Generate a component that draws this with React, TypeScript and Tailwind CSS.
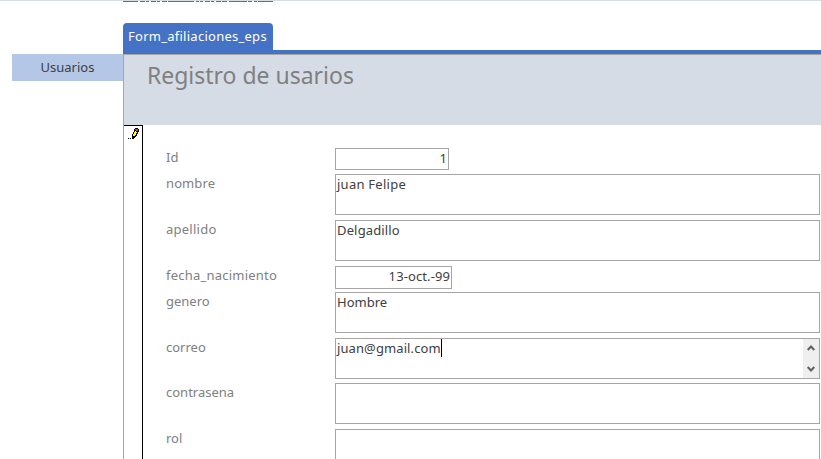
type Row = {
  label: string;
  value: string;
  row: string;
  box: string;
  labelTrack?: string;
  valueTrack?: string;
  active?: boolean;
};

const rows: Row[] = [
  { label: 'Id', value: '1', row: 'h-[22px] mb-1', box: 'w-[114px] text-right' },
  { label: 'nombre', value: 'juan Felipe', row: 'h-[41px] mb-[5px]', box: 'w-[485px]', labelTrack: 'tracking-[0.1px]', valueTrack: 'tracking-[0.25px]' },
  { label: 'apellido', value: 'Delgadillo', row: 'h-[41px] mb-[5px]', box: 'w-[485px]', labelTrack: 'tracking-[0.25px]', valueTrack: 'tracking-[0.15px]' },
  { label: 'fecha_nacimiento', value: '13-oct.-99', row: 'h-[23px] mb-[3px]', box: 'w-[117px] text-right', labelTrack: 'tracking-[0.22px]', valueTrack: 'tracking-[0.1px]' },
  { label: 'genero', value: 'Hombre', row: 'h-[41px] mb-[5px]', box: 'w-[485px]' },
  { label: 'correo', value: 'juan@gmail.com', row: 'h-[41px] mb-1', box: 'w-[485px]', valueTrack: 'tracking-[0.1px]', active: true },
  { label: 'contrasena', value: '', row: 'h-[41px] mb-[5px]', box: 'w-[485px]' },
  { label: 'rol', value: '', row: 'h-[41px]', box: 'w-[485px]' },
];

const segments = [
  'w-[15px]', 'w-[5px]', 'w-[3px]', 'w-[5px]', 'w-[3px]', 'w-[5px]', 'w-[26px]',
  'w-[3px]', 'w-[3px]', 'w-[5px]', 'w-[3px]', 'w-[5px]', 'w-[5px]', 'w-[18px]', 'w-[4px]', 'w-[3px]', 'w-[15px]',
];

function Pencil() {
  return (
    <svg className="ml-1 mt-0.5 shrink-0" width="12" height="12" viewBox="0 0 12 12" shapeRendering="crispEdges">
      <path fill="#000" d="M0 10h1v1h-1zM2 10h1v1h-1zM7 0h3v1h1v3h-1v2h-1v2h-1v1h-1v1h-1v1h-2v-5h1v-2h1v-3h1z" />
      <path fill="#ffff00" d="M7 3h1v1h1v1h-1v2h-1v1h-2v-2h1v-2h1z" />
      <path fill="#e04020" d="M7 1h3v2h-2v-1h-1z" />
    </svg>
  );
}

export default function App() {
  return (
    <div className="flex h-[459px] w-[821px] flex-col overflow-hidden bg-white text-[13px] text-[#404040] [font-family:'Noto_Sans',sans-serif]">
      <div className="h-px shrink-0 bg-[#d6dce5]" />
      <div className="ml-[123px] flex h-px w-[150px] shrink-0 justify-between">
        {segments.map((w, i) => (
          <div key={i} className={`h-px bg-[#4472c4] ${w}`} />
        ))}
      </div>
      <div className="mt-[21px] flex min-h-0 grow">
        <div className="ml-3 mt-[31px] h-[27px] w-[111px] shrink-0 bg-[#b4c7e7] text-center leading-[27px]">Usuarios</div>
        <div className="flex w-[698px] shrink-0 flex-col">
          <div className="h-[27px] w-[150px] shrink-0 rounded-t-[4px] bg-[#4472c4] pl-[5px] leading-[27px] tracking-[0.26px] text-white">Form_afiliaciones_eps</div>
          <div className="h-1 shrink-0 bg-[#4472c4]" />
          <div className="flex min-h-0 grow flex-col border-l border-t border-[#a6a6a6]">
            <div className="h-[70px] shrink-0 bg-[#d6dce5] pl-[23px] pt-[3px] text-[24px] leading-[34px] text-[#808080]">
              <span className="inline-block origin-left scale-x-[0.957]">Registro de usarios</span>
            </div>
            <div className="flex min-h-0 grow">
              <div className="w-[19px] shrink-0 border-r border-t border-black"><Pencil /></div>
              <div className="pl-[23px] pt-[23px]">
                {rows.map((r) => (
                  <div key={r.label} className={`flex ${r.row}`}>
                    <div className={`w-[169px] shrink-0 leading-[18px] text-[#808080] ${r.labelTrack ?? ''}`}>{r.label}</div>
                    <div className={`flex justify-between border border-[#a6a6a6] ${r.box}`}>
                      <div className="flex grow items-start px-px leading-[18px]">
                        <span className={`${r.active ? '' : 'grow'} ${r.valueTrack ?? ''}`}>{r.value}</span>
                        {r.active && <span className="h-[18px] w-px bg-black" />}
                      </div>
                      {r.active && (
                        <div className="flex w-4 flex-col items-center justify-between bg-[#efefef] py-1.5">
                          <svg width="8" height="6" viewBox="0 0 8 6"><path d="M0.7 5L4 1.5L7.3 5" fill="none" stroke="#606060" strokeWidth="2" /></svg>
                          <svg width="8" height="6" viewBox="0 0 8 6"><path d="M0.7 1L4 4.5L7.3 1" fill="none" stroke="#606060" strokeWidth="2" /></svg>
                        </div>
                      )}
                    </div>
                  </div>
                ))}
              </div>
            </div>
          </div>
        </div>
      </div>
    </div>
  );
}
